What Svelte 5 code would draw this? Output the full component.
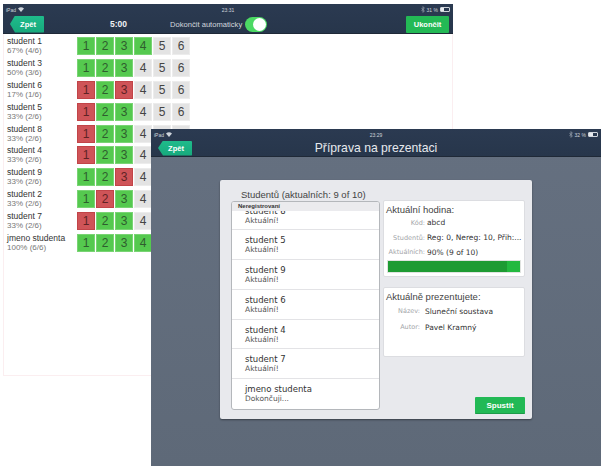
<script>
  const rows = [
    { name: 'student 1', stat: '67% (4/6)', cells: 'gggg--' },
    { name: 'student 3', stat: '50% (3/6)', cells: 'ggg---' },
    { name: 'student 6', stat: '17% (1/6)', cells: 'rgr---' },
    { name: 'student 5', stat: '33% (2/6)', cells: 'rgg---' },
    { name: 'student 8', stat: '33% (2/6)', cells: 'rgg---' },
    { name: 'student 4', stat: '33% (2/6)', cells: 'rgg---' },
    { name: 'student 9', stat: '33% (2/6)', cells: 'ggr---' },
    { name: 'student 2', stat: '33% (2/6)', cells: 'grg---' },
    { name: 'student 7', stat: '33% (2/6)', cells: 'rgg---' },
    { name: 'jmeno studenta', stat: '100% (6/6)', cells: 'gggggg' },
  ];

  const students = [
    { name: 'student 8', note: 'Aktuální!' },
    { name: 'student 5', note: 'Aktuální!' },
    { name: 'student 9', note: 'Aktuální!' },
    { name: 'student 6', note: 'Aktuální!' },
    { name: 'student 4', note: 'Aktuální!' },
    { name: 'student 7', note: 'Aktuální!' },
    { name: 'jmeno studenta', note: 'Dokončuji...' },
  ];
</script>

{#snippet status(time, pct, fill)}
  <div class="status">
    <span class="st-left">
      iPad
      <svg width="6" height="5" viewBox="0 0 6 5"><path d="M0 1.6a4.3 4.3 0 0 1 6 0L3 5z" fill="#cfd5dc" /></svg>
    </span>
    <span class="st-time">{time}</span>
    <span class="st-right">
      <svg width="4" height="7" viewBox="0 0 4 7"><path d="M.3 1.8 3.4 5 2 6.4V.6L3.4 2 .3 5.200" fill="none" stroke="#aab2bc" stroke-width=".6" /></svg>
      {pct} %
      <span class="batt"><span class="batt-fill" style="width: {fill}%"></span></span>
    </span>
  </div>
{/snippet}

<div class="page">
  <section class="win back">
    <header class="bar">
      {@render status('23:31', 31, 40)}
      <div class="nav nav-main">
        <button class="zpet">Zpět</button>
        <span class="clock">5:00</span>
        <span class="auto">Dokončit automaticky</span>
        <span class="toggle"><span class="knob"></span></span>
        <button class="ukoncit">Ukončit</button>
      </div>
    </header>
    <div class="results">
      {#each rows as row}
        <div class="row">
          <div class="who">
            <div class="who-name">{row.name}</div>
            <div class="who-stat">{row.stat}</div>
          </div>
          <div class="cells">
            {#each row.cells as c, i}
              <span class="cell" class:g={c === 'g'} class:r={c === 'r'}>{i + 1}</span>
            {/each}
          </div>
        </div>
      {/each}
    </div>
  </section>

  <section class="win front">
    <header class="bar">
      {@render status('23:29', 32, 45)}
      <div class="nav nav-front">
        <button class="zpet">Zpět</button>
        <h1>Příprava na prezentaci</h1>
      </div>
    </header>
    <div class="stage">
      <div class="panel">
        <div class="col-left">
          <h2>Studentů (aktualních: 9 of 10)</h2>
          <div class="list">
            <div class="list-head">Neregistrovaní</div>
            <div class="list-scroll">
              {#each students as s}
                <div class="item">
                  <div class="item-name">{s.name}</div>
                  <div class="item-note">{s.note}</div>
                </div>
              {/each}
            </div>
          </div>
        </div>
        <div class="col-right">
          <div class="card card-hour">
            <h3>Aktuální hodina:</h3>
            <dl class="hour">
              <dt>Kód:</dt><dd>abcd</dd>
              <dt>Studentů:</dt><dd>Reg: 0, Nereg: 10, Přih:...</dd>
              <dt>Aktuálních:</dt><dd>90% (9 of 10)</dd>
            </dl>
            <div class="progress"><div class="progress-in" style="width: 90%"></div></div>
          </div>
          <div class="card card-pres">
            <h3>Aktuálně prezentujete:</h3>
            <dl class="pres">
              <dt>Název:</dt><dd>Sluneční soustava</dd>
              <dt>Autor:</dt><dd>Pavel Kramný</dd>
            </dl>
          </div>
          <button class="spustit">Spustit</button>
        </div>
      </div>
    </div>
  </section>
</div>

<style>
  :global(body) {
    margin: 0;
    background: #fff;
  }

  .page {
    position: relative;
    width: 604px;
    height: 469px;
    overflow: hidden;
    font-family: "Liberation Sans", Arial, sans-serif;
  }

  .win {
    position: absolute;
    display: flex;
    flex-direction: column;
    box-sizing: border-box;
    width: 450px;
  }

  .back {
    left: 3px;
    top: 4px;
    height: 372px;
    background: #fff;
    border-left: 1px solid #fbeef0;
    border-bottom: 1px solid #fbeef0;
    border-right: 1px solid #fbeef0;
  }

  .front {
    left: 151px;
    top: 129px;
    height: 337px;
    background: linear-gradient(#657080, #5e6978);
  }

  .bar {
    flex: none;
    background: linear-gradient(#2b3a51, #27364b);
    border-bottom: 1px solid #1f2937;
  }

  .back .bar {
    margin: 0 -1px;
  }

  .status {
    display: flex;
    align-items: center;
    justify-content: space-between;
    position: relative;
    height: 11px;
    padding: 0 3px;
    font-size: 5px;
    color: #cfd5dc;
  }

  .st-left, .st-right {
    display: flex;
    align-items: center;
    gap: 2px;
  }

  .st-time {
    position: absolute;
    left: 0;
    right: 0;
    text-align: center;
    pointer-events: none;
  }

  .batt {
    display: block;
    box-sizing: border-box;
    width: 10px;
    height: 5px;
    border: 1px solid #cfd5dc;
    border-radius: 1px;
  }

  .batt-fill {
    display: block;
    height: 100%;
    background: #e6e9ed;
  }

  .nav {
    display: flex;
    align-items: center;
    position: relative;
  }

  .nav-main {
    height: 18px;
    padding: 0 4px 0 7px;
  }

  .nav-front {
    height: 16px;
    padding: 0 7px;
  }

  button {
    border: none;
    color: #fff;
    font-family: inherit;
    font-weight: bold;
    padding: 0;
  }

  .zpet {
    flex: none;
    width: 34px;
    height: 15px;
    font-size: 7.5px;
    padding-left: 2px;
    background: linear-gradient(#1fbb8b, #17a97c);
    clip-path: polygon(5px 0, 100% 0, 100% 100%, 5px 100%, 0 50%);
    border-radius: 1px;
  }

  .nav-main .zpet {
    height: 17px;
  }

  .clock {
    margin-left: 66px;
    font-size: 8.500px;
    font-weight: bold;
    color: #f0f2f5;
  }

  .auto {
    margin-left: 43px;
    font-size: 7.600px;
    color: #d3d8de;
  }

  .toggle {
    display: flex;
    justify-content: flex-end;
    align-items: center;
    box-sizing: border-box;
    margin-left: 3px;
    width: 22px;
    height: 15px;
    padding: 1px;
    border-radius: 8px;
    background: #4cd964;
  }

  .knob {
    display: block;
    width: 13px;
    height: 13px;
    border-radius: 50%;
    background: #fff;
  }

  .ukoncit {
    margin-left: auto;
    width: 43px;
    height: 17px;
    font-size: 7.500px;
    border-radius: 1px;
    background: #23b955;
  }

  h1 {
    position: absolute;
    left: 42px;
    right: 42px;
    top: 0;
    margin: 0;
    text-align: center;
    font-size: 12.200px;
    line-height: 16px;
    font-weight: normal;
    color: #e6e9ed;
  }

  .results {
    padding-top: 3px;
    display: flex;
    flex-direction: column;
    gap: 3.900px;
  }

  .row {
    display: flex;
    height: 18px;
    padding-left: 3px;
  }

  .who {
    width: 70px;
    font-size: 8.500px;
    line-height: 9px;
    color: #333;
  }

  .who-stat {
    font-size: 8px;
    color: #777;
  }

  .cells {
    display: flex;
    gap: 1px;
  }

  .cell {
    box-sizing: border-box;
    width: 18px;
    height: 18px;
    line-height: 16px;
    text-align: center;
    font-size: 12px;
    color: #444;
    background: #e3e3e3;
    border: 1px solid #ececec;
  }

  .cell.g {
    background: #55c94f;
    border-color: #79d474;
    color: #2f5d2e;
  }

  .cell.r {
    background: #cf5458;
    border-color: #c24448;
    color: #5e2325;
  }

  .stage {
    flex: 1;
    padding: 23px 0 0 69px;
  }

  .panel {
    display: flex;
    box-sizing: border-box;
    width: 312px;
    height: 239px;
    padding: 8px 7px 5px 11px;
    background: #e8e9ed;
    border-radius: 2px;
    box-shadow: 0 1px 2px rgba(0, 0, 0, 0.4);
  }

  .col-left {
    width: 149px;
    flex: none;
    display: flex;
    flex-direction: column;
    padding-bottom: 4px;
  }

  h2 {
    margin: 0 0 0 10px;
    font-size: 9.500px;
    line-height: 13px;
    font-weight: normal;
    color: #444;
  }

  .list {
    flex: 1;
    min-height: 0;
    display: flex;
    flex-direction: column;
    background: #fff;
    border: 1px solid #b4b7bb;
    border-radius: 3px;
    overflow: hidden;
  }

  .list-head {
    flex: none;
    height: 9px;
    padding-left: 6px;
    background: #ebebee;
    font-size: 6px;
    line-height: 9px;
    font-weight: bold;
    color: #333;
    position: relative;
    z-index: 1;
  }

  .list-scroll {
    margin-top: -11px;
  }

  .item {
    box-sizing: border-box;
    height: 29.900px;
    padding: 5px 0 0 13px;
    border-bottom: 1px solid #e3e3e6;
    font-family: "DejaVu Sans", Verdana, sans-serif;
  }

  .item:first-child {
    padding-top: 6px;
  }

  .item:last-child {
    border-bottom: none;
  }

  .item-name {
    font-size: 8.500px;
    line-height: 10px;
    color: #333;
  }

  .item-note {
    font-size: 7.500px;
    line-height: 10px;
    color: #555;
  }

  .col-right {
    flex: 1;
    margin-left: 3px;
    display: flex;
    flex-direction: column;
    padding-top: 12px;
    min-width: 0;
  }

  .card {
    box-sizing: border-box;
    background: #fff;
    border: 1px solid #dcdde1;
    border-radius: 2px;
    padding: 3px 2px 0;
  }

  .card-hour {
    height: 77px;
  }

  .card-pres {
    height: 70px;
    margin-top: 10px;
  }

  h3 {
    margin: 0;
    font-size: 9.500px;
    line-height: 12px;
    font-weight: normal;
    color: #444;
  }

  dl {
    display: grid;
    margin: 0;
    font-family: "DejaVu Sans", Verdana, sans-serif;
    align-items: center;
  }

  .hour {
    grid-template-columns: 39px 1fr;
    grid-template-rows: 15px 15px 14px;
    margin-top: -1px;
    column-gap: 2px;
  }

  .pres {
    grid-template-columns: 34px 1fr;
    grid-auto-rows: 16px;
    margin-top: 0;
    column-gap: 5px;
  }

  dt {
    text-align: right;
    font-size: 6.500px;
    color: #a3a5a9;
    white-space: nowrap;
  }

  dd {
    margin: 0;
    font-size: 7.500px;
    color: #333;
    white-space: nowrap;
    overflow: hidden;
  }

  .progress {
    height: 13px;
    margin: 1px 1px 0;
    background: #23b93f;
    border: 1px solid #e0e3e0;
    box-sizing: border-box;
  }

  .progress-in {
    height: 100%;
    background: #1e9b33;
  }

  .spustit {
    align-self: flex-end;
    margin-top: auto;
    width: 50px;
    height: 17px;
    font-size: 8px;
    background: #22b955;
    border-radius: 1px;
    border-bottom: 1px solid #1c9a48;
  }
</style>
